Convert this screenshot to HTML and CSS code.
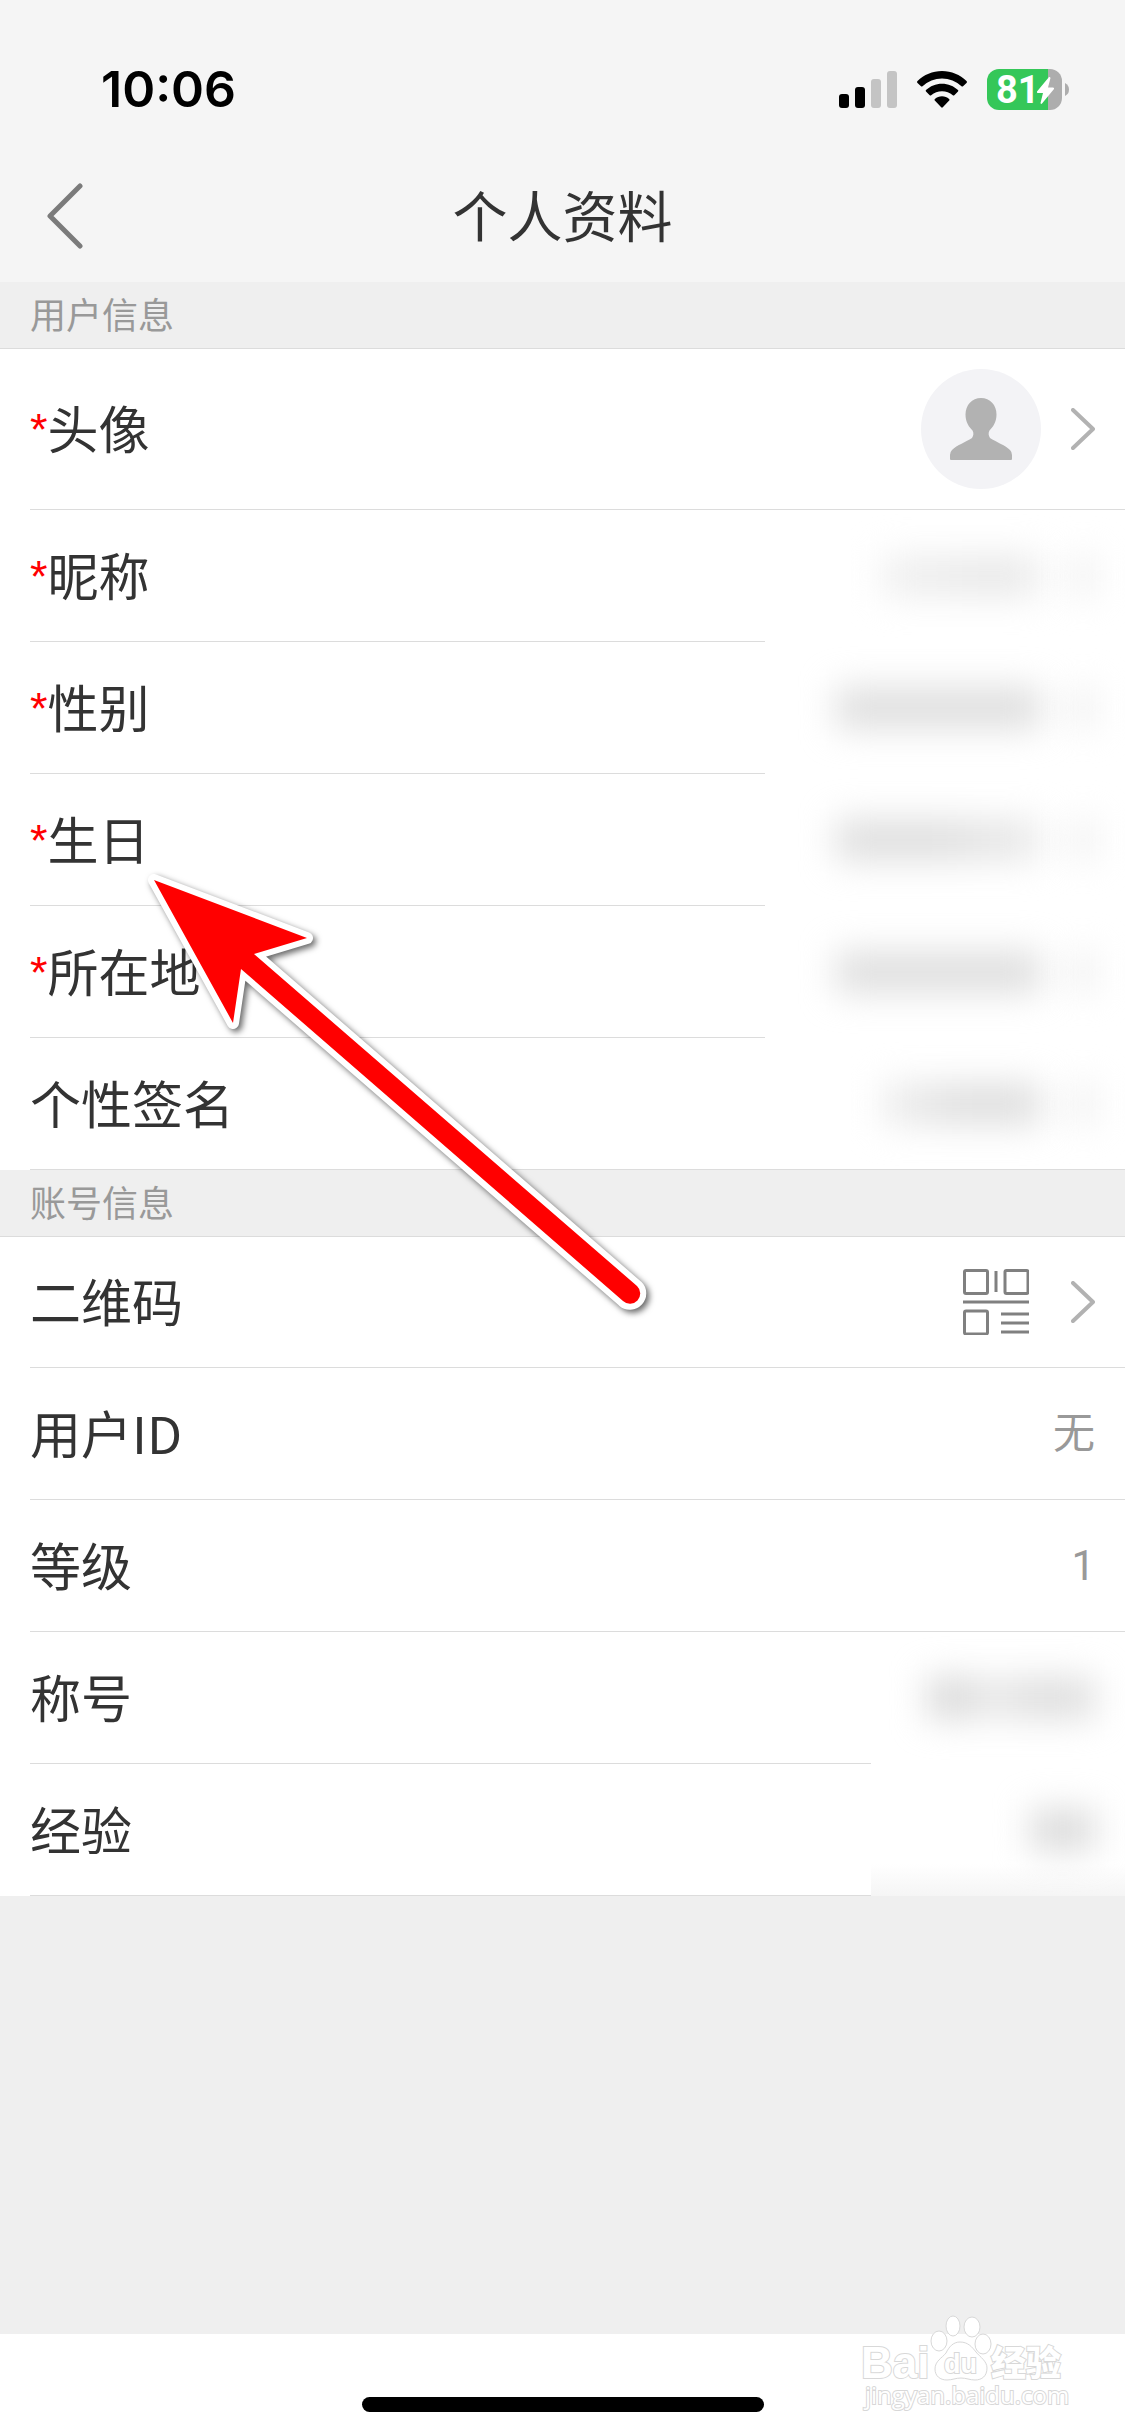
FILE: index.html
```html
<!DOCTYPE html>
<html lang="zh-CN">
<head>
<meta charset="utf-8">
<meta name="viewport" content="width=device-width, initial-scale=1">
<title>个人资料</title>
<link rel="stylesheet" href="styles.css">
</head>
<body>
<div class="page">
  <div class="status-bar">
    <span class="time">10:06</span>
    <div class="status-icons">
      <svg width="58" height="37" viewBox="0 0 58 37" aria-hidden="true">
        <rect x="0" y="23" width="10" height="14" rx="3"/>
        <rect x="16" y="16" width="10" height="21" rx="3"/>
        <rect x="32" y="8" width="10" height="29" rx="3" fill="#c4c4c4"/>
        <rect x="48" y="0" width="10" height="37" rx="3" fill="#c4c4c4"/>
      </svg>
      <svg width="50" height="37" viewBox="0 0 50 37" aria-hidden="true">
        <path d="M25 0C34.500 0 43 3.800 49.500 10Q50.400 11 49.500 12L46 15.300Q45.300 15.900 44.500 15.200A28.300 28.300 0 0 0 5.500 15.200Q4.700 15.900 4 15.300L.5 12Q-.4 11 .5 10C7 3.800 15.500 0 25 0Z"/>
        <path d="M25 12.700C31.200 12.700 36.800 15.100 41 19Q41.700 19.900 41 20.600L37.300 24.300Q36.500 24.900 35.800 24.300A16.200 16.200 0 0 0 14.200 24.300Q13.500 24.900 12.700 24.300L9 20.600Q8.300 19.900 9 19C13.200 15.100 18.800 12.700 25 12.700Z"/>
        <path d="M25 25.200C27.700 25.200 30.200 26.200 32.100 27.900Q32.900 28.800 32.200 29.600L25.800 36.300Q25 37.200 24.200 36.300L17.800 29.600Q17.100 28.800 17.900 27.900C19.800 26.200 22.300 25.200 25 25.200Z"/>
      </svg>
      <svg class="battery" width="82" height="41" viewBox="0 0 82 41" role="img" aria-label="81%">
        <path d="M12 0H61V41H12A12 12 0 0 1 0 29V12A12 12 0 0 1 12 0Z" fill="#35c759"/>
        <path d="M61 0H63A12 12 0 0 1 75 12V29A12 12 0 0 1 63 41H61Z" fill="#adadad"/>
        <path d="M78 14Q82 16 82 20.500T78 27Z" fill="#adadad"/>
        <text class="battery-level" x="9" y="34">81</text>
        <path d="M62 8 50 22.500Q49.500 24 51 24H56L53.500 34Q54 35.500 55 34.500L67 20Q67.500 18.500 66 18.500H61L63.500 9Q63 7.500 62 8Z" fill="#fff"/>
      </svg>
    </div>
  </div>

  <header class="nav">
    <button class="back" type="button" aria-label="返回">
      <svg width="36" height="66" viewBox="0 0 36 66" aria-hidden="true"><path d="M33 3 3 33 33 63"/></svg>
    </button>
    <h1>个人资料</h1>
  </header>

  <main>
    <section>
      <h2>用户信息</h2>
      <ul>
        <li><button type="button" class="row row-tall">
          <span class="label"><i>*</i>头像</span>
          <svg class="avatar" width="120" height="120" viewBox="0 0 120 120" aria-hidden="true">
            <circle cx="60" cy="60" r="60" fill="#f3f3f6"/>
            <path d="M60 29C69 29 75.500 36 75.500 45.500C75.500 53 72 58 68.500 61.500Q66.500 65 69 69C75 73 84 76 89 81Q91 83 91 86V90Q91 91 90 91H30Q29 91 29 90V86Q29 83 31 81C36 76 45 73 51 69Q53.500 65 51.500 61.500C48 58 44.500 53 44.500 45.500C44.500 36 51 29 60 29Z" fill="#b2b2b2"/>
          </svg>
          <svg class="chevron" width="24" height="42" viewBox="0 0 24 42" aria-hidden="true"><path d="M2 2 22 21 2 40"/></svg>
        </button></li>
        <li><button type="button" class="row masked">
          <span class="label"><i>*</i>昵称</span>
          <span class="smudge smudge-short smudge-faint"></span><span class="smudge smudge-arrow"></span>
        </button></li>
        <li><button type="button" class="row masked">
          <span class="label"><i>*</i>性别</span>
          <span class="smudge smudge-long"></span><span class="smudge smudge-arrow"></span>
        </button></li>
        <li><button type="button" class="row masked">
          <span class="label"><i>*</i>生日</span>
          <span class="smudge smudge-long smudge-fade"></span><span class="smudge smudge-arrow"></span>
        </button></li>
        <li><button type="button" class="row masked">
          <span class="label"><i>*</i>所在地</span>
          <span class="smudge smudge-long"></span><span class="smudge smudge-arrow"></span>
        </button></li>
        <li><button type="button" class="row">
          <span class="label">个性签名</span>
          <span class="smudge smudge-short"></span><span class="smudge smudge-arrow"></span>
        </button></li>
      </ul>
    </section>

    <section>
      <h2>账号信息</h2>
      <ul>
        <li><button type="button" class="row">
          <span class="label">二维码</span>
          <svg class="qr" width="66" height="66" viewBox="0 0 66 66" aria-hidden="true">
            <rect x="1.500" y="1.500" width="23" height="23" rx="1.500"/>
            <rect x="42" y="1.500" width="23" height="23" rx="1.500"/>
            <rect x="1.500" y="42" width="23" height="23" rx="1.500"/>
            <path d="M33 2V23M0 33H66M38 45H66M38 54H66M38 63H66"/>
          </svg>
          <svg class="chevron" width="24" height="42" viewBox="0 0 24 42" aria-hidden="true"><path d="M2 2 22 21 2 40"/></svg>
        </button></li>
        <li class="row"><span class="label">用户ID</span><span class="value">无</span></li>
        <li class="row"><span class="label">等级</span><span class="value">1</span></li>
        <li class="row masked-narrow"><span class="label">称号</span><span class="smudge smudge-title"></span></li>
        <li class="row masked-narrow row-last"><span class="label">经验</span><span class="smudge smudge-points"></span></li>
      </ul>
    </section>
  </main>

  <footer class="home-bar"><span class="home-indicator"></span></footer>

  <svg class="pointer" width="510" height="460" viewBox="0 0 510 460" aria-hidden="true">
    <path d="M14 20 167 78 114 94 497 426A10 10 0 0 1 483 441L101 109 93 163Z"/>
    <path class="pointer-fill" d="M14 20 167 78 114 94 497 426A10 10 0 0 1 483 441L101 109 93 163Z"/>
  </svg>

  <svg class="watermark" width="212" height="112" viewBox="0 0 212 112" aria-label="Baidu 经验">
    <text class="wm-brand" x="2" y="66">Bai</text>
    <ellipse cx="80" cy="29" rx="8" ry="10"/>
    <ellipse cx="94" cy="14" rx="7" ry="10"/>
    <ellipse cx="113" cy="15" rx="8" ry="10"/>
    <ellipse cx="124" cy="32" rx="8" ry="10"/>
    <path d="M101 30C94 30 90 35 87 41C83 46 76 49 76 57C76 64 81 68 88 68C93 68 97 66 102 66S111 68 116 68C123 68 128 64 128 56C128 49 121 45 117 40C113 35 109 30 101 30Z"/>
    <text class="wm-du" x="85" y="61">du</text>
    <text class="wm-name" x="132" y="64">经验</text>
    <text class="wm-url" x="6" y="92">jingyan.baidu.com</text>
  </svg>
</div>
</body>
</html>
```
FILE: styles.css
```css
* {
  box-sizing: border-box;
}

body {
  margin: 0;
  background: #efefef;
  color: #333;
  font-family: "Noto Sans CJK SC", "Noto Sans", sans-serif;
}

.page {
  position: relative;
  display: flex;
  flex-direction: column;
  min-height: 100vh;
  overflow: hidden;
}

/* Status bar */
.status-bar {
  display: flex;
  align-items: center;
  justify-content: space-between;
  height: 150px;
  padding: 28px 56px 0 101px;
  background: #f5f5f5;
}

.time {
  color: #000;
  font: 600 50px/60px Inter, sans-serif;
}

.status-icons {
  display: flex;
  align-items: center;
  gap: 20px;
}

.battery-level {
  fill: #fff;
  font: 700 38px Roboto, sans-serif;
}

/* Navigation */
.nav {
  display: grid;
  grid-template-columns: 100px 1fr 100px;
  align-items: center;
  height: 132px;
  background: #f5f5f5;
}

.back {
  display: flex;
  padding: 0 0 0 47px;
  border: 0;
  background: none;
}

.back path,
.chevron path {
  fill: none;
  stroke-linecap: round;
  stroke-linejoin: round;
}

.back path {
  stroke: #7b7b7b;
  stroke-width: 5;
}

h1 {
  margin: 0;
  padding-bottom: 7px;
  font-size: 55px;
  font-weight: 400;
  line-height: 72px;
  text-align: center;
}

/* Lists */
main {
  flex: 1;
}

h2 {
  position: relative;
  height: 67px;
  margin: 0 0 -1px;
  padding-left: 30px;
  border-bottom: 1px solid #dcdcdc;
  background: #efefef;
  color: #999;
  font-size: 36px;
  font-weight: 400;
  line-height: 62px;
}

ul {
  margin: 0;
  padding: 0 0 0 30px;
  background: #fff;
  list-style: none;
}

.row {
  display: flex;
  align-items: center;
  width: 100%;
  height: 132px;
  padding: 0 30px 0 0;
  border: 0;
  background: linear-gradient(#dcdcdc, #dcdcdc) 0 100% / 100% 1px no-repeat;
  color: inherit;
  font: inherit;
}

.row-tall {
  height: 162px;
}

.masked {
  background-size: calc(100% - 360px) 1px;
}

.masked-narrow {
  background-size: calc(100% - 254px) 1px;
}

.row-last {
  background:
    linear-gradient(#dcdcdc, #dcdcdc) 0 100% / calc(100% - 254px) 1px no-repeat,
    linear-gradient(#fff, #f5f5f5) 100% 100% / 254px 32px no-repeat;
}

.label {
  flex: 1;
  padding-bottom: 4px;
  font-size: 51px;
  line-height: 72px;
  text-align: left;
}

.label i {
  color: #f00;
  font-family: "Liberation Sans", sans-serif;
  font-size: 45px;
  font-style: normal;
  line-height: 0;
  vertical-align: 4px;
}

.value {
  color: #999;
  font-family: Roboto, "Noto Sans CJK SC", sans-serif;
  font-size: 42px;
  line-height: 60px;
}

.avatar {
  margin-right: 30px;
}

.chevron path {
  stroke: #b2b2b2;
  stroke-width: 4;
}

.qr {
  margin-right: 42px;
  fill: none;
  stroke: #808080;
  stroke-width: 3;
}

/* Blurred private values */
.smudge {
  height: 42px;
  background: #dfdfdf;
  filter: blur(17px);
}

.smudge-long {
  width: 205px;
}

.smudge-short {
  width: 160px;
  background: linear-gradient(90deg, #f0f0f0, #dfdfdf 50%);
}

.smudge-faint {
  background: linear-gradient(90deg, #f1f1f1, #e8e8e8 70%, #eee);
}

.smudge-fade {
  background: linear-gradient(90deg, #dfdfdf 50%, #ececec);
}

.smudge-arrow {
  width: 24px;
  margin-left: 30px;
  background: #efefef;
}

.smudge-title {
  width: 168px;
  background: linear-gradient(90deg, #dadada 20%, #ececec 40%, #dfdfdf 60%);
}

.smudge-points {
  width: 65px;
  background: #dcdcdc;
}

/* Home bar */
.home-bar {
  display: flex;
  align-items: flex-end;
  justify-content: center;
  height: 102px;
  padding-bottom: 24px;
  background: #fff;
}

.home-indicator {
  width: 402px;
  height: 15px;
  border-radius: 8px;
  background: #000;
}

/* Overlays */
.pointer {
  position: absolute;
  top: 860px;
  left: 140px;
  fill: #fff;
  stroke: #fff;
  stroke-width: 12;
  stroke-linejoin: round;
  filter: drop-shadow(3px 3px 3px rgba(0, 0, 0, .6));
  pointer-events: none;
}

.pointer-fill {
  fill: #f00;
  stroke: none;
}

.watermark {
  position: absolute;
  right: 54px;
  bottom: 12px;
  fill: #fff;
  stroke: #d8d8d8;
  stroke-width: 1;
  pointer-events: none;
}

.watermark text {
  paint-order: stroke;
  stroke-width: 2;
}

.wm-brand {
  font: 700 44px "Liberation Sans", sans-serif;
}

.wm-du {
  font: 700 27px "Liberation Sans", sans-serif;
}

.wm-name {
  font: 900 35px "Noto Sans CJK SC", sans-serif;
}

.wm-url {
  font: 400 24px "Open Sans", sans-serif;
}
```
